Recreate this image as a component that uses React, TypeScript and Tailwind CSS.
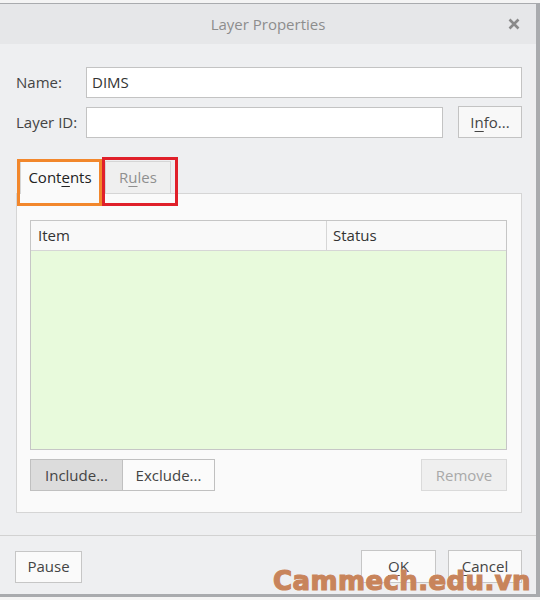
import React from 'react';

const font = { fontFamily: '"Open Sans", "Noto Sans", Arial, sans-serif' };

function U({ children }: { children: React.ReactNode }) {
  return <span className="underline underline-offset-[3px] decoration-1">{children}</span>;
}

function Btn({ children, className = '' }: { children: React.ReactNode; className?: string }) {
  return (
    <button
      className={`flex items-center justify-center border text-[15px] leading-none ${className}`}
    >
      {children}
    </button>
  );
}

export default function App() {
  return (
    <div className="w-[540px] h-[600px] bg-[#f4f4f4] pt-[3px] overflow-hidden" style={font}>
      <div className="relative h-[594px] border-t border-r-[4px] border-b-[3px] border-[#a9abae] bg-[#eeeff1] flex flex-col text-[#333]">
        {/* title bar */}
        <div className="h-[40px] bg-[#e6e7e9] flex items-center justify-center relative shrink-0">
          <span className="text-[15px] text-[#8d8d8d]">Layer Properties</span>
          <svg className="absolute right-[16px] top-[14px]" width="12" height="12" viewBox="0 0 12 12">
            <path d="M1.5 1.5 L10.5 10.5 M10.5 1.5 L1.5 10.5" stroke="#8a8a8a" strokeWidth="2.6" />
          </svg>
        </div>

        <div className="px-[16px] pr-[14px] flex flex-col">
          {/* Name */}
          <div className="flex items-center mt-[23px] h-[31px]">
            <span className="w-[70px] text-[15px] text-[#444]">Name:</span>
            <div className="flex-1 h-[31px] bg-white border border-[#c3c3c3] flex items-center pl-[5px] text-[15px] text-[#333]">
              DIMS
            </div>
          </div>
          {/* Layer ID */}
          <div className="flex items-center mt-[8px] h-[32px]">
            <span className="w-[70px] text-[15px] text-[#444]">Layer ID:</span>
            <div className="w-[357px] h-[31px] bg-white border border-[#c3c3c3]" />
            <Btn className="ml-auto w-[64px] h-[32px] bg-[#f8f8f8] border-[#c3c3c3] text-[#444]">
              I<U>n</U>fo...
            </Btn>
          </div>

          {/* Tabs */}
          <div className="relative flex items-end mt-[21px] h-[34px]">
            <div className="ml-[4px] w-[80px] h-[34px] bg-[#fafafa] border border-b-0 border-[#d5d5d5] flex items-center justify-center text-[15px] text-[#222] relative z-10 -mb-px">
              Cont<U>e</U>nts
            </div>
            <div className="ml-[5px] w-[66px] h-[32px] bg-[#efefef] border border-b-0 border-[#d5d5d5] flex items-center justify-center text-[15px] text-[#8f8f8f]">
              R<U>u</U>les
            </div>
            {/* annotation boxes */}
            <div className="absolute left-[1px] top-[0px] w-[85px] h-[47px] border-[3px] border-[#f2872c] z-20" />
            <div className="absolute left-[86px] top-[-2px] w-[76px] h-[49px] border-[3px] border-[#e0202a] z-20" />
          </div>

          {/* Panel */}
          <div className="h-[320px] bg-[#fafafa] border border-[#d5d5d5] pl-[13px] pr-[14px] pt-[26px] flex flex-col">
            <div className="h-[230px] border border-[#c6c6c6] flex flex-col">
              <div className="h-[30px] bg-[#f9f9f9] border-b border-[#d6d6d6] flex text-[15px] text-[#333] shrink-0">
                <div className="w-[296px] border-r border-[#d6d6d6] flex items-center pl-[7px]">Item</div>
                <div className="flex items-center pl-[6px] flex-1">Status</div>
              </div>
              <div className="flex-1 bg-[#e8fadc]" />
            </div>
            <div className="flex mt-[9px] h-[32px]">
              <Btn className="w-[93px] h-[32px] bg-[#dcdcdc] border-[#c0c0c0] text-[#444]">Include...</Btn>
              <Btn className="w-[92px] h-[32px] bg-[#fbfbfb] border-[#c0c0c0] border-l-0 text-[#444]">Exclude...</Btn>
              <Btn className="ml-auto w-[86px] h-[32px] bg-[#efefef] border-[#dadada] text-[#a9a9a9]">Remove</Btn>
            </div>
          </div>
        </div>

        {/* separator */}
        <div className="mt-[22px] border-t border-[#d2d2d2]" />

        {/* footer */}
        <div className="flex items-center px-[15px] pr-[14px] mt-[14px]">
          <Btn className="w-[67px] h-[32px] bg-[#fafafa] border-[#c6c6c6] text-[#444]">Pause</Btn>
          <Btn className="ml-auto w-[75px] h-[33px] bg-[#fafafa] border-[#c6c6c6] text-[#444]">
            <U>O</U>K
          </Btn>
          <Btn className="ml-[12px] w-[74px] h-[33px] bg-[#fafafa] border-[#c6c6c6] text-[#444]">
            <U>C</U>ancel
          </Btn>
        </div>

        {/* watermark */}
        <div className="absolute left-[273px] bottom-[0px] text-[26px] font-bold tracking-[0.4px] text-[#c8845b] leading-none font-['DejaVu_Sans',sans-serif] [-webkit-text-stroke:1.2px_#c8845b] [text-shadow:0_0_2px_rgba(255,255,255,0.8)]">
          Cammech.edu.vn
        </div>
      </div>
    </div>
  );
}
